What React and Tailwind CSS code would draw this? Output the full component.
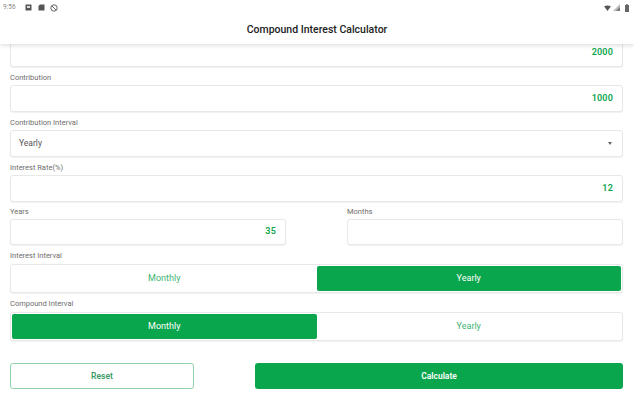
const labelCls = 'block text-[7.5px] leading-[10px] text-[#6e6e6e]'
const fieldCls = 'flex items-center bg-white border border-[#e8e8e8] rounded-[3px] shadow-[0_1px_1px_rgba(0,0,0,0.06)] text-[9px] font-semibold text-[#0aa64d] tracking-[0.2px]'

function Field({ label, value, className = '', height = 'h-[27px]' }) {
  return (
    <div className={className}>
      <span className={`${labelCls} mb-[2px]`}>{label}</span>
      <div className={`${fieldCls} ${height} justify-end pr-[9px]`}>{value}</div>
    </div>
  )
}

function Toggle({ label, active }) {
  const options = ['Monthly', 'Yearly']
  return (
    <div>
      <span className={`${labelCls} mb-[3px]`}>{label}</span>
      <div className="flex h-[29px] p-[1px] bg-white border border-[#e8e8e8] rounded-[3px] shadow-[0_1px_1px_rgba(0,0,0,0.06)]">
        {options.map((o) => (
          <div
            key={o}
            className={
              o === active
                ? 'flex-1 flex items-center justify-center rounded-[2px] bg-[#0aa64d] text-white text-[9px]'
                : 'flex-1 flex items-center justify-center text-[#3fb573] text-[9px]'
            }
          >
            {o}
          </div>
        ))}
      </div>
    </div>
  )
}

export default function App() {
  return (
    <div className="w-[634px] h-[400px] overflow-hidden bg-white flex flex-col font-['Roboto',sans-serif]">
      {/* Header */}
      <div className="relative z-10 h-[44px] shrink-0 bg-white shadow-[0_1px_5px_rgba(0,0,0,0.16)]">
        <div className="h-[15px] pl-[3px] pr-[4px] flex items-center justify-between">
          <div className="flex items-center text-[#8a8a8a]">
            <span className="text-[6.5px] w-[22px]">9:56</span>
            <svg width="7" height="7" viewBox="0 0 7 7" className="mr-[6px]">
              <rect x="0.5" y="0.5" width="6" height="6" rx="0.5" fill="#555" />
              <rect x="2" y="2" width="3" height="2" fill="#ddd" />
            </svg>
            <svg width="7" height="7" viewBox="0 0 7 7" className="mr-[5px]">
              <path d="M2 0.5h4.5v6h-6v-4.500z" fill="#555" />
            </svg>
            <svg width="8" height="8" viewBox="0 0 8 8">
              <circle cx="4" cy="4" r="3.200" fill="none" stroke="#666" strokeWidth="1" />
              <path d="M2 2l4 4" stroke="#666" strokeWidth="1" />
            </svg>
          </div>
          <div className="flex items-center gap-[2px]">
            <svg width="7" height="6" viewBox="0 0 8 7">
              <path d="M0 1.500Q4 -0.500 8 1.500L4 7z" fill="#555" />
            </svg>
            <svg width="7" height="7" viewBox="0 0 7 7">
              <path d="M0 7L7 0v7z" fill="#bbb" />
              <path d="M3 7L7 3v4z" fill="#777" />
            </svg>
            <svg width="6" height="8" viewBox="0 0 6 8" className="ml-[2px]">
              <path d="M1 1h4v7h-4z" fill="#666" />
              <rect x="2.300" y="0" width="1.400" height="1" fill="#666" />
            </svg>
          </div>
        </div>
        <div className="text-center text-[10.5px] leading-[14px] mt-[8px] text-[#222222] font-medium">
          Compound Interest Calculator
        </div>
      </div>

      {/* Form */}
      <div className="flex-1 pl-[10px] pr-[11px] flex flex-col">
        {/* first field is scrolled under the header */}
        <div className={`${fieldCls} h-[23px] justify-end pr-[9px] pb-[4px] border-t-0 rounded-t-none`}>2000</div>
        <div className="flex flex-col gap-[6px] mt-[6px]">
          <Field label="Contribution" value="1000" />
          <div>
            <span className={`${labelCls} mb-[2px]`}>Contribution Interval</span>
            <div className={`${fieldCls} h-[27px] justify-between pl-[8px] pr-[10px] !font-normal !text-[#555555] !text-[8.5px] !tracking-normal`}>
              <span>Yearly</span>
              <span className="w-0 h-0 border-x-[2.500px] border-x-transparent border-t-[3px] border-t-[#666666]"></span>
            </div>
          </div>
          <Field label="Interest Rate(%)" value="12" />
          <div className="flex justify-between -mt-[1px]">
            <Field label="Years" value="35" className="w-[276px]" height="h-[26px]" />
            <Field label="Months" value="" className="w-[276px]" height="h-[26px]" />
          </div>
          <Toggle label="Interest Interval" active="Yearly" />
          <Toggle label="Compound Interval" active="Monthly" />
        </div>
        <div className="flex justify-between mt-[22px]">
          <button className="w-[184px] h-[26px] bg-white border border-[#8fd3ab] rounded-[3px] text-[8.5px] font-semibold text-[#3c9c68]">
            Reset
          </button>
          <button className="w-[368px] h-[26px] bg-[#0aa64d] rounded-[3px] text-[8.5px] font-semibold text-white">
            Calculate
          </button>
        </div>
      </div>
    </div>
  )
}
